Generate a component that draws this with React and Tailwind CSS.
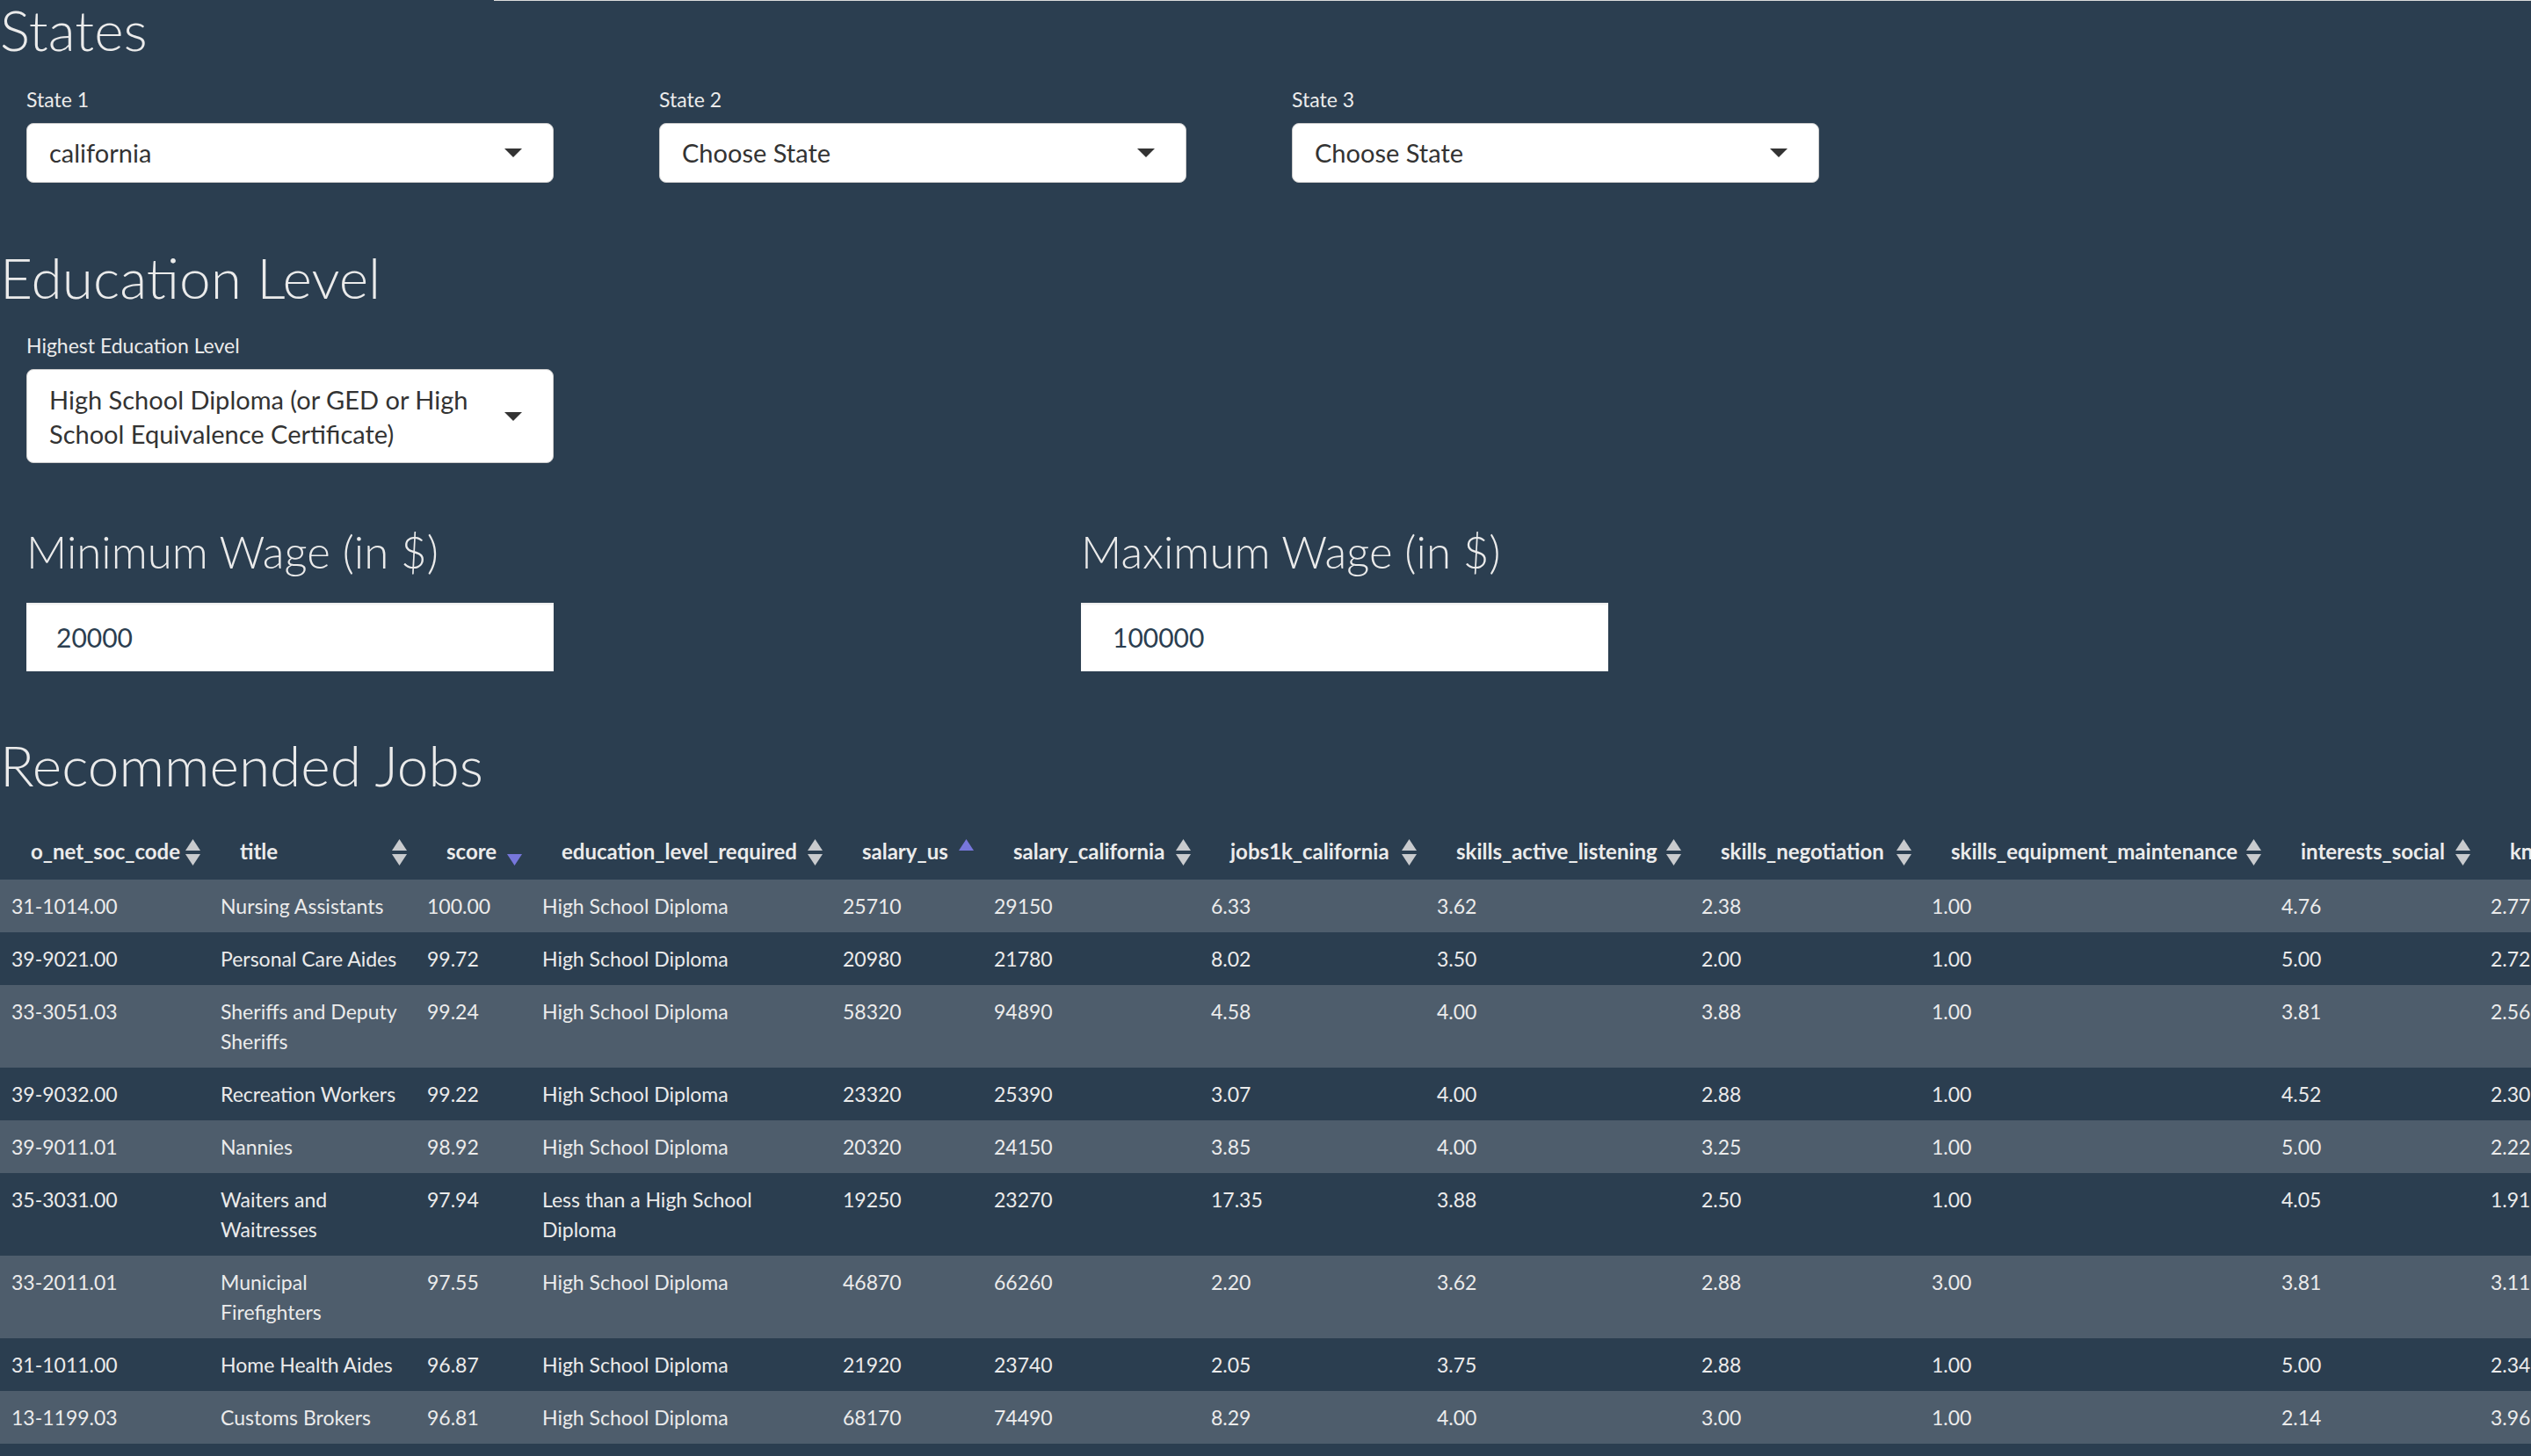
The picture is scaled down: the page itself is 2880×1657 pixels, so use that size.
import React from "react";

const cols = [
  { key: "o_net_soc_code", w: "w-[238px]", sort: "both" },
  { key: "title", w: "w-[235px]", sort: "both" },
  { key: "score", w: "w-[131px]", sort: "desc" },
  { key: "education_level_required", w: "w-[342px]", sort: "both" },
  { key: "salary_us", w: "w-[172px]", sort: "asc" },
  { key: "salary_california", w: "w-[247px]", sort: "both" },
  { key: "jobs1k_california", w: "w-[257px]", sort: "both" },
  { key: "skills_active_listening", w: "w-[301px]", sort: "both" },
  { key: "skills_negotiation", w: "w-[262px]", sort: "both" },
  { key: "skills_equipment_maintenance", w: "w-[398px]", sort: "both" },
  { key: "interests_social", w: "w-[238px]", sort: "both" },
  { key: "knowledge_customer_service", w: "w-[420px]", sort: "both" },
];

const HSD = "High School Diploma";
const rows = [
  ["31-1014.00", "Nursing Assistants", "100.00", HSD, "25710", "29150", "6.33", "3.62", "2.38", "1.00", "4.76", "2.77"],
  ["39-9021.00", "Personal Care Aides", "99.72", HSD, "20980", "21780", "8.02", "3.50", "2.00", "1.00", "5.00", "2.72"],
  ["33-3051.03", ["Sheriffs and Deputy", "Sheriffs"], "99.24", HSD, "58320", "94890", "4.58", "4.00", "3.88", "1.00", "3.81", "2.56"],
  ["39-9032.00", "Recreation Workers", "99.22", HSD, "23320", "25390", "3.07", "4.00", "2.88", "1.00", "4.52", "2.30"],
  ["39-9011.01", "Nannies", "98.92", HSD, "20320", "24150", "3.85", "4.00", "3.25", "1.00", "5.00", "2.22"],
  ["35-3031.00", ["Waiters and", "Waitresses"], "97.94", ["Less than a High School", "Diploma"], "19250", "23270", "17.35", "3.88", "2.50", "1.00", "4.05", "1.91"],
  ["33-2011.01", ["Municipal", "Firefighters"], "97.55", HSD, "46870", "66260", "2.20", "3.62", "2.88", "3.00", "3.81", "3.11"],
  ["31-1011.00", "Home Health Aides", "96.87", HSD, "21920", "23740", "2.05", "3.75", "2.88", "1.00", "5.00", "2.34"],
  ["13-1199.03", "Customs Brokers", "96.81", HSD, "68170", "74490", "8.29", "4.00", "3.00", "1.00", "2.14", "3.96"],
];

function SortIcon({ sort }) {
  const gray = "#c9cbce";
  const blue = "#7777dc";
  return (
    <svg width="17" height="30" viewBox="0 0 17 30" className="absolute right-[10px] top-[31px]">
      {(sort === "both" || sort === "asc") && (
        <path d="M8.5 0 L17 13 L0 13 Z" fill={sort === "asc" ? blue : gray} />
      )}
      {(sort === "both" || sort === "desc") && (
        <path d="M0 17 L17 17 L8.5 30 Z" fill={sort === "desc" ? blue : gray} />
      )}
    </svg>
  );
}

function Caret() {
  return (
    <svg width="20" height="10" viewBox="0 0 20 10" className="shrink-0">
      <path d="M0 0 L20 0 L10 10 Z" fill="#333333" />
    </svg>
  );
}

function Select({ label, value, tall }) {
  return (
    <div className="flex flex-col">
      <div className="text-[23px] leading-[30px] mb-[12px]">{label}</div>
      <div
        className={
          "w-[600px] bg-white border border-[#cccccc] rounded-[8px] pl-[25px] pr-[35px] flex items-center justify-between text-[29px] text-[#333333] " +
          (tall ? "h-[107px] leading-[39px]" : "h-[68px] leading-[36px]")
        }
      >
        <span>{value}</span>
        <Caret />
      </div>
    </div>
  );
}

function Cell({ v }) {
  if (Array.isArray(v)) {
    return (
      <>
        {v[0]}
        <br />
        {v[1]}
      </>
    );
  }
  return v;
}

export default function App() {
  return (
    <div className="w-[2880px] min-h-screen bg-[#2b3e50] text-[#ebebeb] font-['Lato','Open_Sans',sans-serif] overflow-hidden">
      <div className="flex h-px">
        <div className="w-[562px]" />
        <div className="flex-1 bg-[#dcdcdc]" />
      </div>

      <h2 className="text-[64px] font-light leading-[66px]">States</h2>
      <div className="flex mt-[31px]">
        <div className="w-[720px] px-[30px]">
          <Select label="State 1" value="california" />
        </div>
        <div className="w-[720px] px-[30px]">
          <Select label="State 2" value="Choose State" />
        </div>
        <div className="w-[720px] px-[30px]">
          <Select label="State 3" value="Choose State" />
        </div>
      </div>

      <h2 className="text-[64px] font-light leading-[66px] mt-[75px]">Education Level</h2>
      <div className="flex mt-[29px]">
        <div className="w-[720px] px-[30px]">
          <Select
            label="Highest Education Level"
            tall
            value={
              <>
                High School Diploma (or GED or High
                <br />
                School Equivalence Certificate)
              </>
            }
          />
        </div>
      </div>

      <div className="flex mt-[72px]">
        <div className="w-[1200px] px-[30px]">
          <h3 className="text-[51px] font-light leading-[57px] mb-[30px]">Minimum Wage (in $)</h3>
          <div className="w-[600px] h-[78px] bg-white flex items-center pl-[34px] text-[30px] leading-[36px] text-[#2b3e50] shadow-[inset_0_2px_2px_rgba(0,0,0,0.08)]">
            20000
          </div>
        </div>
        <div className="w-[1200px] px-[30px]">
          <h3 className="text-[51px] font-light leading-[57px] mb-[30px]">Maximum Wage (in $)</h3>
          <div className="w-[600px] h-[78px] bg-white flex items-center pl-[36px] text-[30px] leading-[36px] text-[#2b3e50] shadow-[inset_0_2px_2px_rgba(0,0,0,0.08)]">
            100000
          </div>
        </div>
      </div>

      <h2 className="text-[64px] font-light leading-[66px] mt-[74px]">Recommended Jobs</h2>

      <div className="mt-[20px] w-[2880px] overflow-hidden">
        <table className="table-fixed border-collapse w-[3241px]">
          <thead>
            <tr>
              {cols.map((c) => (
                <th
                  key={c.key}
                  className={
                    c.w +
                    " relative text-left font-bold text-[24px] leading-[34px] pl-[35px] pr-[30px] pt-[28px] pb-[15px] whitespace-nowrap"
                  }
                >
                  {c.key}
                  <SortIcon sort={c.sort} />
                </th>
              ))}
            </tr>
          </thead>
          <tbody>
            {rows.map((r, i) => (
              <tr key={i} className={i % 2 === 0 ? "bg-[#4e5d6c]" : "bg-[#2b3e50]"}>
                {r.map((v, j) => (
                  <td
                    key={j}
                    className="align-top text-[23px] leading-[34px] pl-[13px] pr-[13px] py-[13px] whitespace-nowrap"
                  >
                    <Cell v={v} />
                  </td>
                ))}
              </tr>
            ))}
          </tbody>
        </table>
      </div>
    </div>
  );
}
